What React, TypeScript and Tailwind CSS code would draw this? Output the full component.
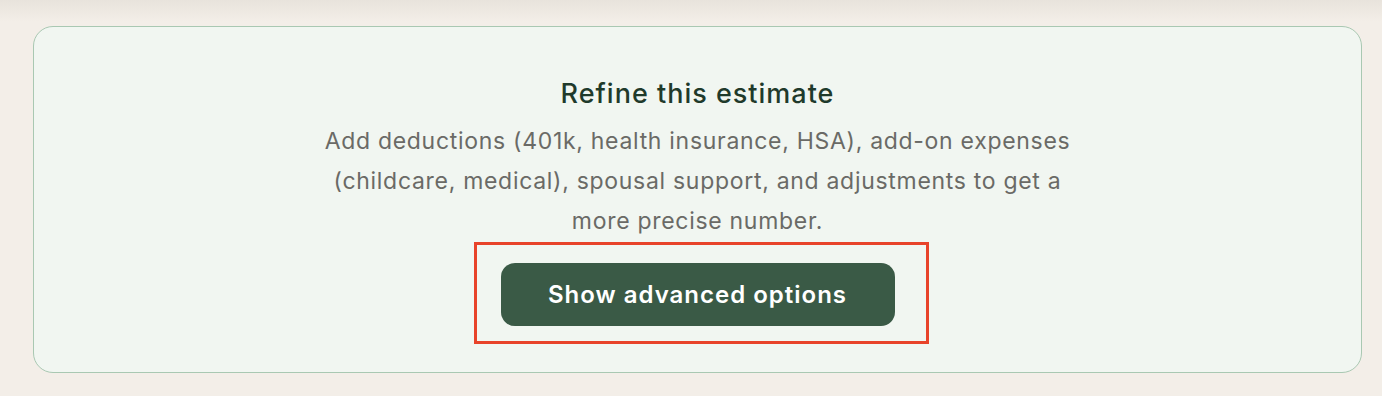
import React from 'react';

export default function App() {
  return (
    <div
      className="min-h-screen w-full bg-[#f3eee8]"
      style={{ fontFamily: 'Inter, "Noto Sans", sans-serif' }}
    >
      <div className="h-[22px] bg-gradient-to-b from-[#e8e3dc] to-[#f3eee8]" />
      <div className="pl-[33px] pr-[20px] pt-[4px]">
        <div className="flex h-[347px] flex-col items-center rounded-[20px] border border-[#a9c8b2] bg-[#f1f6f1] pt-[50px]">
          <h2 className="text-[27px] font-medium leading-[34px] tracking-[1px] text-[#1f3a2b]">
            Refine this estimate
          </h2>
          <p className="mt-[10px] max-w-[790px] text-center text-[23px] leading-[40px] tracking-[0.7px] text-[#6a6a66]">
            Add deductions (401k, health insurance, HSA), add-on expenses (childcare, medical), spousal support, and adjustments to get a more precise number.
          </p>
          <div className="relative mt-[22px]">
            <button className="h-[63px] w-[394px] rounded-[14px] bg-[#3a5a46] text-[24px] font-semibold tracking-[1px] text-white">
              Show advanced options
            </button>
            <span className="pointer-events-none absolute -bottom-[18px] -left-[27px] -right-[34px] -top-[21px] border-[3px] border-[#e8432a]" />
          </div>
        </div>
      </div>
    </div>
  );
}
